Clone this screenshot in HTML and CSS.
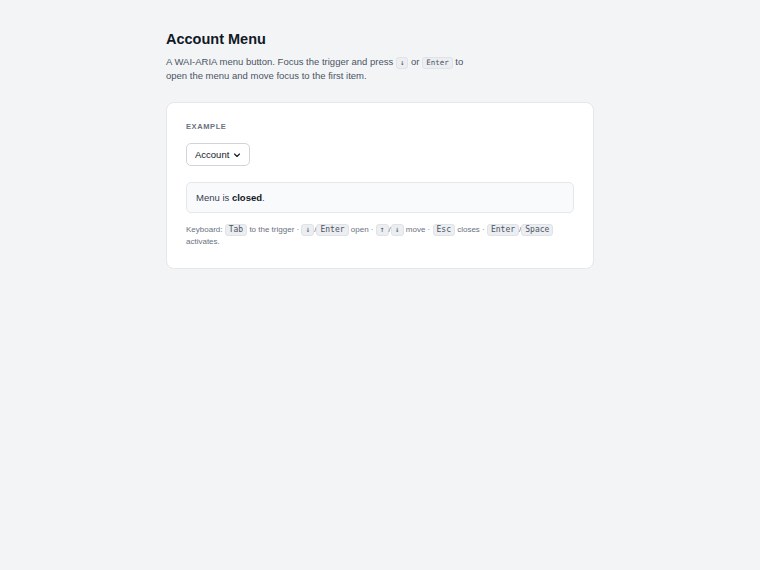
FILE: index.html
```html
<!DOCTYPE html>
<html lang="en">
<head>
  <meta charset="UTF-8">
  <title>Account Menu</title>
  <link rel="stylesheet" href="styles.css">
</head>
<body>

  <main class="page">
    <h1>Account Menu</h1>
    <p class="intro">A WAI-ARIA menu button. Focus the trigger and press <kbd>↓</kbd> or <kbd>Enter</kbd> to open the menu and move focus to the first item.</p>

    <section class="card">
      <h2 class="label">Example</h2>

      <button class="trigger" id="trigger" aria-haspopup="true" aria-expanded="false">
        Account
        <svg width="8" height="8" viewBox="0 0 8 8" aria-hidden="true"><path d="M1.5 3l2.5 2.5L6.5 3" fill="none" stroke="currentColor" stroke-width="1.1" stroke-linecap="round" stroke-linejoin="round"/></svg>
      </button>

      <div class="status">Menu is <strong id="state">closed</strong>.</div>

      <p class="hint">Keyboard: <kbd>Tab</kbd> to the trigger · <kbd>↓</kbd>/<kbd>Enter</kbd> open · <kbd>↑</kbd>/<kbd>↓</kbd> move · <kbd>Esc</kbd> closes · <kbd>Enter</kbd>/<kbd>Space</kbd> activates.</p>
    </section>
  </main>

</body>
</html>
```

FILE: styles.css
```css
* { margin: 0; padding: 0; box-sizing: border-box; }
body {
  background-color: #f3f4f6;
  font-family: "Liberation Sans", Arial, sans-serif;
  color: #1f2937;
}
.page {
  width: 428px;
  margin: 0 auto;
  padding-top: 29px;
}
h1 {
  font-size: 14.5px;
  font-weight: bold;
  color: #111827;
  line-height: 20px;
}
.intro {
  margin-top: 6px;
  max-width: 302px;
  font-size: 9.5px;
  line-height: 14px;
  color: #4b5563;
}
kbd {
  display: inline-block;
  font-family: "DejaVu Sans Mono", "Liberation Mono", monospace;
  font-size: 8px;
  line-height: 10px;
  background-color: #eceef1;
  border: 1px solid #dfe2e6;
  border-radius: 3px;
  padding: 0 3px;
  color: #4b5563;
}
.intro kbd { font-size: 7.5px; }
.card {
  margin-top: 19px;
  background-color: #ffffff;
  border: 1px solid #e5e7eb;
  border-radius: 8px;
  padding: 19px 19px 20px;
}
.label {
  font-size: 7.5px;
  font-weight: bold;
  letter-spacing: 0.6px;
  text-transform: uppercase;
  color: #6b7280;
  line-height: 10px;
}
.trigger {
  display: flex;
  align-items: center;
  gap: 4px;
  margin-top: 11px;
  height: 23px;
  padding: 0 8px;
  background-color: #ffffff;
  border: 1px solid #d1d5db;
  border-radius: 5px;
  font-family: inherit;
  font-size: 9.5px;
  color: #111827;
  cursor: pointer;
}
.status {
  margin-top: 16px;
  height: 31px;
  line-height: 29px;
  padding: 0 9px;
  background-color: #f9fafb;
  border: 1px solid #e5e7eb;
  border-radius: 5px;
  font-size: 9.5px;
  color: #374151;
}
.status strong { color: #111827; }
.hint {
  margin-top: 11px;
  font-size: 8px;
  line-height: 12px;
  color: #6b7280;
}
```
